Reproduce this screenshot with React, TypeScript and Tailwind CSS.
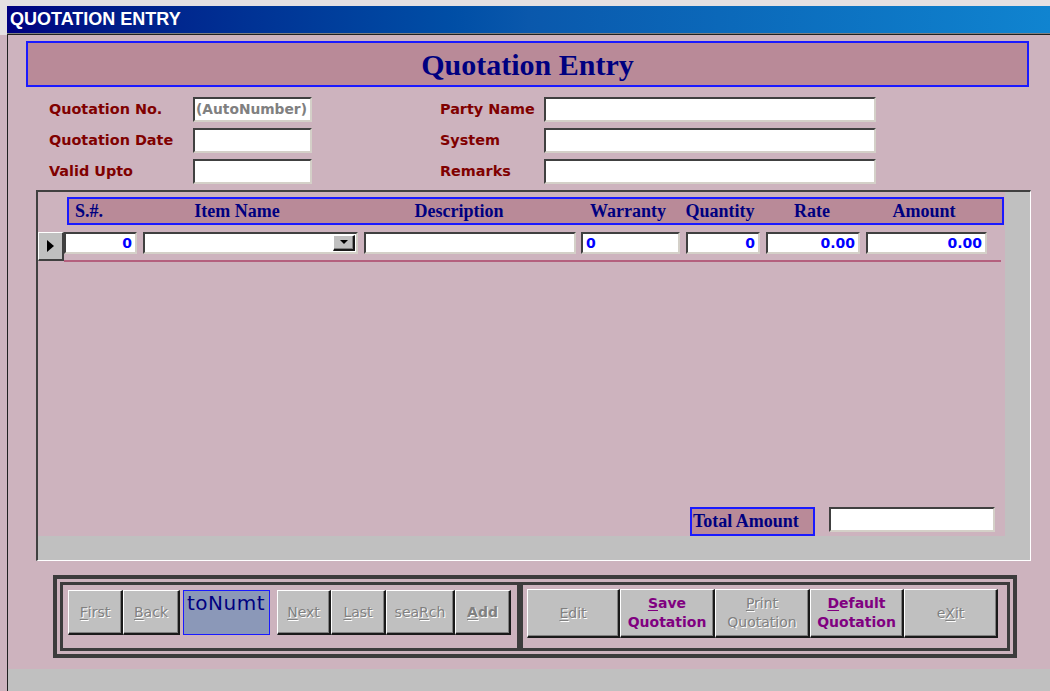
import React from "react";

const sunken =
  "bg-white border-t-2 border-l-2 border-t-[#404040] border-l-[#404040] border-b-2 border-r-2 border-b-[#d4d0c8] border-r-[#d4d0c8]";
const raised =
  "bg-[#c0c0c0] border-t border-l border-t-white border-l-white border-b-2 border-r-2 border-b-[#1a1a1a] border-r-[#1a1a1a] shadow-[inset_-1px_-1px_0_#808080]";
const label = "font-['DejaVu_Sans',sans-serif] font-bold text-[14.4px] text-[#800000] leading-[25px]";
const head = "font-['Liberation_Serif',serif] font-bold text-[18px] text-[#000080] leading-[24px]";
const num = "font-['DejaVu_Sans',sans-serif] font-bold text-[14px] text-[#0000ff] leading-[18px] px-[3px]";
const disabled = "text-[#808080] [text-shadow:1px_1px_0_#ffffff]";

function Mn({ children }: { children: React.ReactNode }) {
  return <span className="underline underline-offset-2">{children}</span>;
}

function NavButton({ w, children, bold }: { w: string; children: React.ReactNode; bold?: boolean }) {
  return (
    <div
      className={`${raised} ${w} h-[45px] flex items-center justify-center font-['DejaVu_Sans',sans-serif] text-[14px] ${bold ? "font-bold" : ""} ${disabled}`}
    >
      {children}
    </div>
  );
}

function ActionButton({ w, children, active }: { w: string; children: React.ReactNode; active?: boolean }) {
  return (
    <div
      className={`${raised} ${w} h-[49px] flex flex-col items-center justify-center leading-[19px] font-['DejaVu_Sans',sans-serif] text-[14px] ${
        active ? "font-bold text-[#800080]" : disabled
      }`}
    >
      {children}
    </div>
  );
}

export default function App() {
  return (
    <div className="w-[1050px] h-[691px] overflow-hidden bg-[#cdb3be] flex flex-col">
      <div className="h-[6px] bg-[#e4e0e2] shrink-0" />
      <div className="h-[29px] flex shrink-0">
        <div className="w-[7px] bg-[#e4e0e2]" />
        <div className="flex-1 flex flex-col">
          <div className="h-[27px] bg-gradient-to-r from-[#000080] via-[#0a58ac] to-[#1084d0] pl-[3px] flex items-center">
            <span className="font-['Liberation_Sans',sans-serif] font-bold text-[18px] text-white">
              QUOTATION ENTRY
            </span>
          </div>
          <div className="h-[1px] bg-[#808080]" />
          <div className="h-[1px] bg-[#202020]" />
        </div>
      </div>

      <div className="flex-1 flex">
        <div className="w-[7px]" />
        <div className="w-[1px] bg-[#202020]" />
        <div className="flex-1 flex flex-col">
          {/* heading */}
          <div className="mt-[6px] ml-[18px] w-[1003px] h-[46px] bg-[#b98a98] border-2 border-[#1a1aff] flex items-center justify-center">
            <span className="font-['Liberation_Serif',serif] font-bold text-[30px] text-[#000080]">Quotation Entry</span>
          </div>

          {/* header fields */}
          <div className="mt-[10px] flex">
            <div className="ml-[41px] w-[144px] flex flex-col gap-[6px]">
              <div className={label}>Quotation No.</div>
              <div className={label}>Quotation Date</div>
              <div className={label}>Valid Upto</div>
            </div>
            <div className="w-[119px] flex flex-col gap-[6px]">
              <div className={`${sunken} bg-[#c0c0c0] h-[25px] px-[1px] overflow-hidden whitespace-nowrap font-['DejaVu_Sans',sans-serif] font-bold text-[13.8px] leading-[20px] ${disabled}`}>
                (AutoNumber)
              </div>
              <div className={`${sunken} h-[25px]`} />
              <div className={`${sunken} h-[25px]`} />
            </div>
            <div className="ml-[128px] w-[104px] flex flex-col gap-[6px]">
              <div className={label}>Party Name</div>
              <div className={label}>System</div>
              <div className={label}>Remarks</div>
            </div>
            <div className="w-[332px] flex flex-col gap-[6px]">
              <div className={`${sunken} h-[25px]`} />
              <div className={`${sunken} h-[25px]`} />
              <div className={`${sunken} h-[25px]`} />
            </div>
          </div>

          {/* items grid */}
          <div className="mt-[6px] ml-[28px] w-[995px] h-[371px] flex flex-col border-t-2 border-l-2 border-t-[#404040] border-l-[#404040] border-b border-r border-b-white border-r-white">
            <div className="flex h-[344px]">
              <div className="flex-1 flex flex-col">
                <div className="mt-[5px] ml-[29px] w-[937px] h-[28px] bg-[#b98a98] border-2 border-[#1a1aff] flex">
                  <div className={`${head} w-[74px] pl-[6px]`}>S.#.</div>
                  <div className={`${head} w-[188px] text-center`}>Item Name</div>
                  <div className={`${head} w-[256px] text-center`}>Description</div>
                  <div className={`${head} w-[82px] text-center`}>Warranty</div>
                  <div className={`${head} w-[102px] text-center`}>Quantity</div>
                  <div className={`${head} w-[82px] text-center`}>Rate</div>
                  <div className={`${head} w-[142px] text-center`}>Amount</div>
                </div>

                <div className="mt-[7px] flex">
                  <div className="w-[26px] h-[29px] bg-[#c0c0c0] border-r-2 border-b-2 border-r-[#404040] border-b-[#404040] border-t border-l border-t-white border-l-white flex items-center justify-center">
                    <svg width="7" height="12" viewBox="0 0 7 12">
                      <path d="M0 0 L7 6 L0 12 Z" fill="#000" />
                    </svg>
                  </div>
                  <div className="flex flex-col">
                    <div className="flex h-[22px]">
                      <div className={`${sunken} w-[73px] text-right ${num}`}>0</div>
                      <div className={`${sunken} ml-[6px] w-[215px] flex justify-end items-center pr-[1px]`}>
                        <div className={`${raised} w-[22px] h-[16px] flex items-center justify-center`}>
                          <svg width="8" height="5" viewBox="0 0 8 5">
                            <path d="M0 0 L8 0 L4 4 Z" fill="#000" />
                          </svg>
                        </div>
                      </div>
                      <div className={`${sunken} ml-[6px] w-[212px]`} />
                      <div className={`${sunken} ml-[5px] w-[99px] text-left ${num}`}>0</div>
                      <div className={`${sunken} ml-[6px] w-[74px] text-right ${num}`}>0</div>
                      <div className={`${sunken} ml-[6px] w-[94px] text-right ${num}`}>0.00</div>
                      <div className={`${sunken} ml-[6px] w-[121px] text-right ${num}`}>0.00</div>
                    </div>
                    <div className="mt-[6px] w-[937px] h-[2px] bg-[#b4607e]" />
                  </div>
                </div>

                <div className="flex-1" />
                <div className="flex justify-end items-start pr-[10px]">
                  <div className="w-[125px] h-[29px] bg-[#b98a98] border-2 border-[#1a1aff] pl-[1px] overflow-hidden whitespace-nowrap">
                    <span className={head}>Total Amount</span>
                  </div>
                  <div className={`${sunken} ml-[14px] w-[166px] h-[25px]`} />
                </div>
              </div>
              <div className="w-[25px] bg-[#c0c0c0]" />
            </div>
            <div className="flex-1 bg-[#c0c0c0]" />
          </div>

          {/* record navigation and actions */}
          <div className="mt-[14px] ml-[45px] w-[964px] h-[83px] border-4 border-[#3c3c3c] p-[3px] flex">
            <div className="w-[460px] border-[3px] border-[#3c3c3c] flex items-start pt-[5px] pl-[5px]">
              <NavButton w="w-[55px]">
                <Mn>F</Mn>irst
              </NavButton>
              <NavButton w="w-[57px]">
                <Mn>B</Mn>ack
              </NavButton>
              <div className="ml-[3px] w-[87px] h-[45px] bg-[#8b98b8] border border-[#1a1aff] overflow-hidden whitespace-nowrap pl-[3px] font-['DejaVu_Sans',sans-serif] text-[20px] tracking-[0.5px] leading-[24px] text-[#000080]">
                toNumt
              </div>
              <div className="ml-[7px] flex">
                <NavButton w="w-[54px]">
                  <Mn>N</Mn>ext
                </NavButton>
                <NavButton w="w-[55px]">
                  <Mn>L</Mn>ast
                </NavButton>
                <NavButton w="w-[69px]">
                  sea<Mn>R</Mn>ch
                </NavButton>
                <NavButton w="w-[56px]" bold>
                  <Mn>A</Mn>dd
                </NavButton>
              </div>
            </div>
            <div className="flex-1 border-[3px] border-[#3c3c3c] flex items-start pt-[4px] pl-[4px]">
              <ActionButton w="w-[93px]">
                <span>
                  <Mn>E</Mn>dit
                </span>
              </ActionButton>
              <ActionButton w="w-[95px]" active>
                <span>
                  <Mn>S</Mn>ave
                </span>
                <span>Quotation</span>
              </ActionButton>
              <ActionButton w="w-[95px]">
                <span>
                  <Mn>P</Mn>rint
                </span>
                <span>Quotation</span>
              </ActionButton>
              <ActionButton w="w-[94px]" active>
                <span>
                  <Mn>D</Mn>efault
                </span>
                <span>Quotation</span>
              </ActionButton>
              <ActionButton w="w-[94px]">
                <span>
                  e<Mn>X</Mn>it
                </span>
              </ActionButton>
            </div>
          </div>

          <div className="mt-[11px] flex-1 bg-[#c0c0c0]" />
        </div>
      </div>
    </div>
  );
}
